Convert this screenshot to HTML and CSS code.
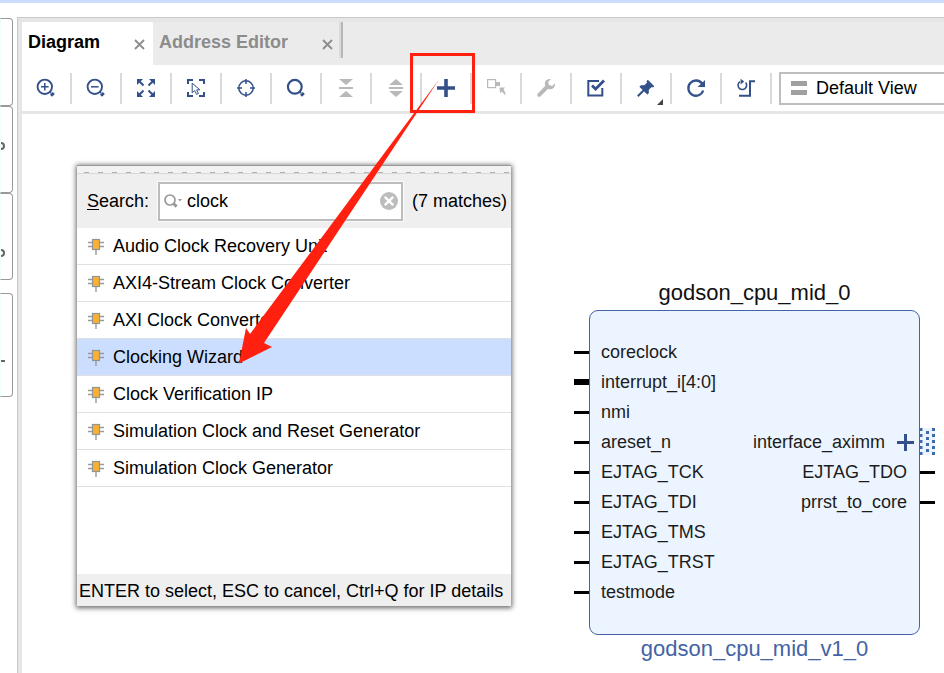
FILE: index.html
```html
<!DOCTYPE html>
<html lang="en">
<head>
<meta charset="utf-8">
<title>Block Design</title>
<link rel="stylesheet" href="styles.css">
</head>
<body>
<svg width="0" height="0" class="defs" aria-hidden="true">
  <symbol id="chip" viewBox="0 0 16 17">
    <path d="M0 4.5H16M0 8.5H16M8 12V17" stroke="#9a9a9a" stroke-width="1.4" fill="none"/>
    <rect x="4.500" y="1.500" width="7" height="10" fill="#fbb031" stroke="#8f959c" stroke-width="1.2"/>
  </symbol>
</svg>
<div class="topline"></div>
<div class="workspace">
  <aside class="rail">
    <div class="rail-tab"></div>
    <div class="rail-tab"><i class="hook"></i></div>
    <div class="rail-tab"><i class="hook low"></i></div>
    <div class="rail-tab apart"><i class="tick"></i></div>
  </aside>
  <main class="editor">
    <nav class="tabs">
      <div class="tab active"><span>Diagram</span>
        <button class="close" aria-label="Close Diagram"><svg width="11" height="11" viewBox="0 0 11 11"><path d="M1 1L10 10M10 1L1 10"/></svg></button></div>
      <div class="tab"><span>Address Editor</span>
        <button class="close" aria-label="Close Address Editor"><svg width="11" height="11" viewBox="0 0 11 11"><path d="M1 1L10 10M10 1L1 10"/></svg></button></div>
      <div class="tab-end"></div>
    </nav>
    <div class="toolbar">
      <button class="tool" aria-label="Zoom in"><svg viewBox="0 0 18 18"><circle cx="7.8" cy="7.8" r="7.2" stroke-width="1.9"/><path d="M4 7.8H11.6M7.8 4V11.6" stroke-width="1.5"/><path d="M12.5 12.5L14 14" stroke-width="2"/><path d="M14.4 14.4L16.4 16.4" stroke-width="4"/></svg></button>
      <button class="tool" aria-label="Zoom out"><svg viewBox="0 0 18 18"><circle cx="7.8" cy="7.8" r="7.2" stroke-width="1.9"/><path d="M4 7.8H11.6" stroke-width="1.5"/><path d="M12.5 12.5L14 14" stroke-width="2"/><path d="M14.4 14.4L16.4 16.4" stroke-width="4"/></svg></button>
      <button class="tool" aria-label="Zoom fit"><svg viewBox="0 0 18 18"><path d="M1.5 1.5L6.5 6.5M16.5 1.5L11.5 6.5M1.5 16.5L6.5 11.5M16.5 16.5L11.5 11.5" stroke-width="2"/><path class="solid" d="M0 0H6L4 2L2 4L0 6ZM18 0H12L16 4L18 6ZM0 18H6L2 14L0 12ZM18 18H12L16 14L18 12Z"/></svg></button>
      <button class="tool" aria-label="Select area"><svg viewBox="0 0 18 18"><path d="M1 5V1H6M12 1H17V5M1 13V17H6M12 17H17V13" stroke-width="2"/><path d="M5.2 4.2V13.8L7.6 11.6L9.6 15.4L11.4 14.5L9.6 10.9L12.9 10.8Z" stroke-width="1"/></svg></button>
      <button class="tool" aria-label="Center"><svg viewBox="0 0 18 18"><circle cx="9" cy="9" r="7.2" stroke-width="1.5"/><path d="M9 0V5M9 13V18M0 9H5M13 9H18" stroke-width="1.5"/></svg></button>
      <button class="tool" aria-label="Search"><svg viewBox="0 0 18 18"><circle cx="7.8" cy="7.8" r="6.9" stroke-width="2.2"/><path d="M12.5 12.5L14 14" stroke-width="2"/><path d="M14.4 14.4L16.4 16.4" stroke-width="4"/></svg></button>
      <button class="tool off" aria-label="Collapse"><svg viewBox="0 0 18 18"><path d="M2 9H16" stroke-width="2"/><path class="solid" d="M2 0H16L9 6ZM2 18H16L9 12Z"/></svg></button>
      <button class="tool off" aria-label="Expand"><svg viewBox="0 0 18 18"><path d="M2 9H16" stroke-width="2"/><path class="solid" d="M2 6H16L9 0ZM2 12H16L9 18Z"/></svg></button>
      <button class="tool" aria-label="Add IP"><svg viewBox="0 0 18 18"><path d="M0 9H18M9 0V18" stroke-width="3.6"/></svg></button>
      <button class="tool off" aria-label="Make external"><svg viewBox="0 0 18 18"><rect x=".6" y=".6" width="8" height="8" stroke-width="1.2"/><path class="solid" d="M8.5 3H13V7H8.5ZM12.5 8.5H18L16.6 10.4L18.4 14V16.5L14.8 12.4L13 14Z"/></svg></button>
      <button class="tool off" aria-label="Customize"><svg viewBox="0 0 18 18"><path d="M2.2 15.8L10.5 7.5" stroke-width="4" stroke-linecap="round"/><path class="solid" d="M13.8 .2C10 -.6 7 2.5 8 6.2L11.6 10.2C15.5 11 18.6 8 17.9 4.2L15.2 6.9L12 6L11.1 2.9Z"/></svg></button>
      <button class="tool" aria-label="Validate"><svg viewBox="0 0 18 18"><path d="M12 1.9H1.3V16.5H15.3V9" stroke-width="2"/><path d="M5 6.5L8.6 10L17 1.6" stroke-width="2.8"/></svg></button>
      <button class="tool menu" aria-label="Pin"><svg viewBox="0 0 18 18"><path d="M.8 17.2L7 11" stroke-width="2"/><path class="solid" d="M10.8 .8L17.3 7.3L15.8 8.5L14.7 8L11.8 10.7L11.8 14.2L10.3 15.6L2.4 7.7L3.9 6.3H7.4L10.1 3.4L9.5 2.2Z"/></svg></button>
      <button class="tool" aria-label="Refresh"><svg viewBox="0 0 18 18"><path d="M15.1 4.6A7.6 7.6 0 1 0 16.2 11.5" stroke-width="2.3"/><path class="solid" d="M18 1V8H10.6Z"/></svg></button>
      <button class="tool" aria-label="Regenerate layout"><svg viewBox="0 0 18 18"><path d="M3 2.6A4.3 4.3 0 1 0 8.6 3.4" stroke-width="1.6"/><path class="solid" d="M3.6 -.3L7.2 2.5L3.6 5.4Z"/><path d="M2 16.8H13V2.2H18" stroke-width="2"/></svg></button>
      <div class="view">
        <svg class="bars" width="16" height="14" viewBox="0 0 16 14"><path d="M0 0H16V5H0ZM0 9H16V14H0Z" fill="#a0a0a0"/></svg>
        <select aria-label="View"><option>Default View</option></select>
      </div>
    </div>
    <section class="canvas">
      <div class="popup">
        <div class="grip"></div>
        <div class="search">
          <label for="q"><u>S</u>earch:</label>
          <div class="field">
            <svg width="19" height="15" viewBox="0 0 19 15" fill="none" stroke="#999"><circle cx="6" cy="6" r="5" stroke-width="1.7"/><path d="M9.8 9.8L12.6 12.6" stroke-width="3"/><path d="M14 5H18L16 7.4Z" fill="#999" stroke="none"/></svg>
            <input id="q" type="text" value="clock">
            <button class="clear" aria-label="Clear"><svg width="18" height="18" viewBox="0 0 18 18"><circle cx="9" cy="9" r="9" fill="#bdbdbd"/><path d="M4.8 4.8L13.2 13.2M13.2 4.8L4.8 13.2" stroke="#fff" stroke-width="2.4"/></svg></button>
          </div>
          <span>(7 matches)</span>
        </div>
        <ul class="results">
          <li><svg><use href="#chip"/></svg>Audio Clock Recovery Unit</li>
          <li><svg><use href="#chip"/></svg>AXI4-Stream Clock Converter</li>
          <li><svg><use href="#chip"/></svg>AXI Clock Converter</li>
          <li class="selected"><svg><use href="#chip"/></svg>Clocking Wizard</li>
          <li><svg><use href="#chip"/></svg>Clock Verification IP</li>
          <li><svg><use href="#chip"/></svg>Simulation Clock and Reset Generator</li>
          <li><svg><use href="#chip"/></svg>Simulation Clock Generator</li>
        </ul>
        <div class="hint">ENTER to select, ESC to cancel, Ctrl+Q for IP details</div>
      </div>
      <div class="node">
        <div class="node-name">godson_cpu_mid_0</div>
        <div class="block">
          <ul class="ports in">
            <li>coreclock</li><li class="bus">interrupt_i[4:0]</li><li>nmi</li><li>areset_n</li><li>EJTAG_TCK</li><li>EJTAG_TDI</li><li>EJTAG_TMS</li><li>EJTAG_TRST</li><li>testmode</li>
          </ul>
          <ul class="ports out">
            <li class="iface">interface_aximm<svg width="17" height="17" viewBox="0 0 17 17"><path d="M0 8.5H17M8.5 0V17" stroke="#34508a" stroke-width="3"/></svg>
              <svg class="dots" width="15" height="27" viewBox="0 0 15 27"><rect width="15" height="27" fill="#ecf5ff"/><path d="M1 0V27M13.500 0V27" stroke="#3d6ba8" stroke-width="3" stroke-dasharray="3 3"/><path d="M7.500 3V27" stroke="#3d6ba8" stroke-width="3" stroke-dasharray="3 3"/></svg></li><li>EJTAG_TDO</li><li>prrst_to_core</li>
          </ul>
        </div>
        <div class="node-type">godson_cpu_mid_v1_0</div>
      </div>
    </section>
  </main>
</div>
<svg class="callout" width="240" height="320" viewBox="238 50 240 320" aria-hidden="true">
  <rect x="411.5" y="54.5" width="62" height="57" fill="none" stroke="#ff2010" stroke-width="3"/>
  <path d="M439 79.500L250 334L246 328L239 363.500L272 347L264 343Z" fill="#ff2010"/>
</svg>
</body>
</html>
```
FILE: styles.css
```css
* { box-sizing: border-box; }
body {
  margin: 0;
  min-height: 100vh;
  display: flex;
  flex-direction: column;
  overflow: hidden;
  background: #fff;
  color: #000;
  font: 18px/24px "Liberation Sans", Arial, sans-serif;
}
ul { list-style: none; margin: 0; padding: 0; }
button { padding: 0; border: 0; background: none; }
.defs { position: absolute; }
.topline { height: 3px; background: #ccdeff; }
.workspace { flex: 1; display: flex; padding-top: 14px; }

.rail { width: 17px; padding-right: 4px; }
.rail-tab {
  height: 87px;
  padding-top: 35px;
  border: 1px solid #999;
  border-left: 1px dotted #dcffff;
  border-radius: 0 4px 4px 0;
}
.rail-tab:first-child { height: 88px; margin-top: 1px; }
.rail-tab.apart { height: 104px; margin-top: 13px; padding-top: 66px; }
.rail-tab i { display: block; }
.hook {
  width: 4px;
  height: 8px;
  border: 2px solid #666;
  border-left: 0;
  border-radius: 0 4px 4px 0;
}
.hook.low { margin-top: 20px; }
.tick { width: 4px; height: 2px; background: #666; }

.editor {
  flex: 1;
  min-width: 0;
  display: flex;
  flex-direction: column;
  border-top: 1px solid #c8c8c8;
  border-left: 1px solid #c8c8c8;
}
.tabs {
  display: flex;
  height: 47px;
  border-top: 4px solid #e6e6e6;
  border-left: 4px solid #e6e6e6;
  background: #ebebeb;
}
.tab {
  display: flex;
  align-items: center;
  gap: 34px;
  padding: 0 8px 3px 6px;
  font-weight: bold;
  color: #8c8c8c;
}
.tab + .tab { padding-right: 6px; }
.tab.active { background: #fff; color: #000; }
.close { display: flex; padding-top: 4px; }
.close path { stroke: #8c8c8c; stroke-width: 1.8; }
.tab-end { width: 4px; height: 36px; border-left: 2px solid #dadada; background: #b8b8b8; }

.toolbar {
  display: flex;
  align-items: center;
  height: 49px;
  border-left: 4px solid #e6e6e6;
  border-bottom: 3px solid #e6e6e6;
}
.tool {
  flex: none;
  display: flex;
  align-items: center;
  justify-content: center;
  width: 50px;
  height: 31px;
  border-right: 2px solid #dadada;
  color: #34508a;
}
.tool.off { color: #b9b9b9; }
.tool svg { width: 18px; height: 18px; overflow: visible; fill: none; stroke: currentColor; }
.tool .solid { fill: currentColor; stroke: none; }
.menu { position: relative; }
.menu::after {
  content: "";
  position: absolute;
  right: 7px;
  bottom: -1px;
  border-left: 6px solid transparent;
  border-bottom: 6px solid #444;
}
.view {
  flex: 1;
  display: flex;
  align-items: center;
  gap: 9px;
  height: 33px;
  margin-left: 7px;
  padding-left: 10px;
  border: 2px solid #bebebe;
  border-right: 0;
}
.bars { flex: none; }
select {
  flex: 1;
  min-width: 0;
  padding: 0;
  border: 0;
  background: none;
  appearance: none;
  color: inherit;
  font: inherit;
}

.canvas { flex: 1; position: relative; border-left: 4px solid #e6e6e6; }
.popup {
  position: absolute;
  left: 55px;
  top: 51px;
  width: 434px;
  height: 441px;
  display: flex;
  flex-direction: column;
  border-top: 1px solid #999;
  background: #fff;
  box-shadow: 0 1px 5px 1px rgba(0, 0, 0, .6);
}
.grip {
  height: 8px;
  border-bottom: 1px solid #d8d8d8;
  background:
    repeating-linear-gradient(90deg, transparent 0 7px, #b0b0b0 7px 12px, transparent 12px 14px) 0 6px / 100% 1px no-repeat,
    #f2f2f2;
}
.search {
  display: flex;
  align-items: center;
  gap: 9px;
  height: 54px;
  padding: 0 4px 0 10px;
  background: #efefef;
}
u { text-underline-offset: 2px; }
.field {
  flex: 1;
  min-width: 0;
  display: flex;
  align-items: center;
  height: 39px;
  padding: 0 3px 0 4px;
  border: 2px solid #bcbcbc;
  background: #fff;
  box-shadow: 0 0 0 1px #fafafa;
}
.field svg { flex: none; }
.field input {
  flex: 1;
  min-width: 0;
  padding: 0 0 0 4px;
  border: 0;
  outline: 0;
  background: none;
  font: inherit;
}
.clear { display: flex; }
.results { flex: 1; }
.results li {
  display: flex;
  align-items: center;
  gap: 9px;
  height: 37px;
  padding-left: 11px;
  border-bottom: 1px solid #e0e0e0;
}
.results .selected { background: #ccdeff; }
.results svg { width: 16px; height: 17px; }
.hint { padding: 5px 2px 3px; background: #efefef; white-space: nowrap; }

.node { position: absolute; left: 567px; top: 163px; width: 331px; color: #1c1c1c; }
.node-name, .node-type { font-size: 22px; line-height: 31px; text-align: center; }
.node-name { padding-bottom: 2px; color: #111; }
.node-type { line-height: 28px; color: #4463a5; }
.block {
  display: flex;
  justify-content: space-between;
  padding: 26px 12px 27px 11px;
  border: 1px solid #4463a5;
  border-radius: 9px;
  background: #ecf5ff;
}
.ports { line-height: 30px; }
.ports li { position: relative; }
.ports li::before {
  content: "";
  position: absolute;
  top: 14px;
  width: 15px;
  height: 3px;
  background: #000;
}
.in li::before { left: -27px; }
.in .bus::before { top: 12px; height: 6px; }
.out { padding-top: 90px; text-align: right; }
.out li::before { right: -28px; }
.out .iface { display: flex; align-items: center; gap: 12px; margin-right: -7px; }
.out .iface::before { display: none; }
.dots { position: absolute; top: 1px; right: -21px; }

.callout { position: absolute; left: 238px; top: 50px; pointer-events: none; }
```
